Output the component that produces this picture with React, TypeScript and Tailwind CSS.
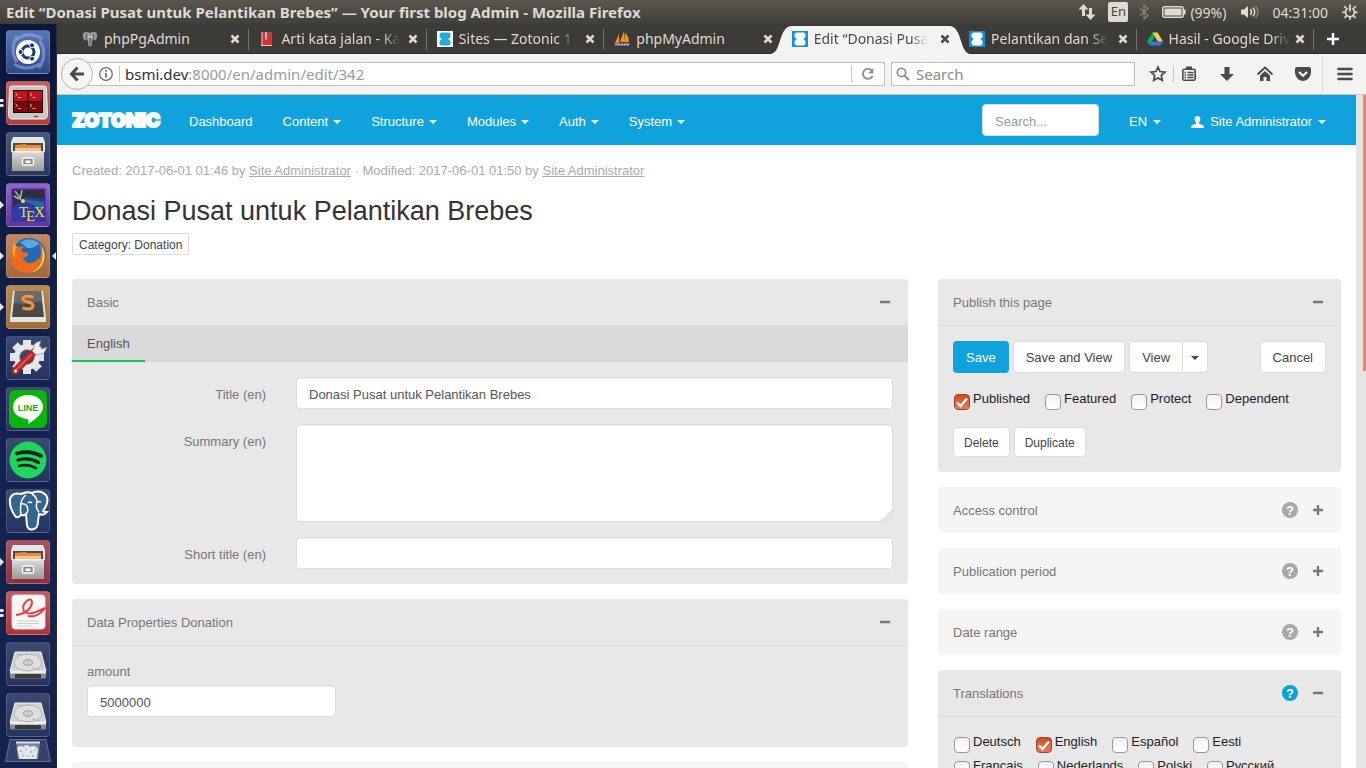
import React, { useId } from "react";

const ubuntu = "font-['Noto_Sans',sans-serif]";

/* ---------- Desktop top bar ---------- */

function TopBar() {
  return (
    <header
      className={`${ubuntu} flex h-6 shrink-0 items-center justify-between bg-linear-to-b from-[#5a574d] to-[#3f3e39] pr-2 pl-1.5 text-[14px] text-[#dfdbd2]`}
    >
      <h1 className="truncate text-[15px] font-bold">
        Edit “Donasi Pusat untuk Pelantikan Brebes” — Your first blog Admin - Mozilla Firefox
      </h1>
      <div className="flex shrink-0 items-center">
        <svg width="18" height="16" viewBox="0 0 18 16" fill="#dfdbd2" className="mr-3" aria-label="Network">
          <path d="M5.500 0l5 5.500H7V12H4V5.500H.5z" />
          <path d="M12.500 16l-5-5.500H11V4h3v6.500h3.500z" />
        </svg>
        <span className="mr-2 flex h-5 w-5 items-center justify-center rounded-xs bg-[#dfdbd2] text-[13px] text-[#45433d]">En</span>
        <svg width="16" height="16" viewBox="0 0 16 16" fill="none" stroke="#85827a" strokeWidth="1.300" className="mr-2.5" aria-label="Bluetooth">
          <path d="M4 4.500l8 7L8 15V1l4 3.500-8 7" />
        </svg>
        <svg width="24" height="12" viewBox="0 0 24 12" className="mr-1" aria-label="Battery">
          <rect x=".75" y=".75" width="20.500" height="10.500" rx="2" fill="none" stroke="#dfdbd2" strokeWidth="1.500" />
          <rect x="2.500" y="2.500" width="17" height="7" fill="#dfdbd2" />
          <rect x="21.500" y="3.500" width="2" height="5" fill="#dfdbd2" />
        </svg>
        <span className="mr-3.5">(99%)</span>
        <svg width="20" height="16" viewBox="0 0 20 16" fill="none" stroke="#dfdbd2" strokeWidth="1.500" className="mr-3" aria-label="Volume">
          <path d="M1 5.500h3L8 2v12l-4-3.500H1z" fill="#dfdbd2" stroke="none" />
          <path d="M10.500 5q2 3 0 6M13 3.500q3.500 4.500 0 9" />
          <path d="M15.500 2q5 6 0 12" stroke="#85827a" />
        </svg>
        <span className="mr-3.5">04:31:00</span>
        <svg width="16" height="16" viewBox="0 0 16 16" fill="none" stroke="#dfdbd2" aria-label="Session">
          <path d="M6 4.200a4.500 4.500 0 1 0 4 0" strokeWidth="1.700" />
          <path d="M8 .5v7" strokeWidth="1.800" />
          <path d="M4 4L2.300 2.300M12 4l1.700-1.700M3 8.300H.3M15.700 8.300H13M4.300 12l-1.800 1.800M11.700 12l1.800 1.800M8 13v2.700" strokeWidth="1.800" />
        </svg>
      </div>
    </header>
  );
}

/* ---------- Launcher ---------- */

type TileProps = {
  name: string;
  tone: string;
  left?: "one" | "two";
  right?: boolean;
  children: React.ReactNode;
};

function Tile({ name, tone, left, right, children }: TileProps) {
  return (
    <li className="relative flex justify-center">
      {left === "one" && (
        <svg className="absolute top-4.5 left-0" width="4" height="8" viewBox="0 0 4 8"><path d="M0 0l4 4-4 4z" fill="#e6e6e6" /></svg>
      )}
      {left === "two" && (
        <svg className="absolute top-4.5 left-0" width="4" height="8" viewBox="0 0 4 8"><path d="M0 0h3l1 1.500L3 3H0zM0 5h3l1 1.500L3 8H0z" fill="#e6e6e6" /></svg>
      )}
      <button
        aria-label={name}
        className={`size-11 overflow-hidden rounded-sm border border-white/15 bg-linear-to-b ${tone}`}
      >
        <svg viewBox="0 0 44 44" className="-m-px size-11">{children}</svg>
      </button>
      {right && (
        <svg className="absolute top-4.5 right-0" width="4" height="8" viewBox="0 0 4 8"><path d="M4 0L0 4l4 4z" fill="#e6e6e6" /></svg>
      )}
    </li>
  );
}

function Cabinet() {
  const g = useId();
  return (
    <>
      <defs>
        <linearGradient id={g} x1="0" y1="0" x2="0" y2="1">
          <stop offset="0" stopColor="#dcdcdc" />
          <stop offset="1" stopColor="#9a9a9a" />
        </linearGradient>
      </defs>
      <path d="M7 5h30l2 5v10H5V10z" fill="#e6e6e6" />
      <path d="M7 11h30v8H7z" fill="#4a4a4a" />
      <path d="M9 13l10-1 2 1h14v7H9z" fill="#e88a3c" />
      <path d="M9 16h26v3H9z" fill="#f6c48c" />
      <path d="M6 19h32v20H6z" fill={`url(#${g})`} />
      <path d="M6 19h32v1.500H6z" fill="#f3f3f3" />
      <rect x="16.500" y="26" width="11" height="7" rx="1" fill="#8a8a8a" stroke="#fff" strokeWidth="1.500" />
      <rect x="19.500" y="28.500" width="5" height="2.500" fill="#fff" />
    </>
  );
}

function Disk() {
  return (
    <>
      <path d="M9 10h26l5 19H4z" fill="#d2d2d2" stroke="#f0f0f0" />
      <path d="M4 29h36v6q0 1.500-2 1.500H6q-2 0-2-1.500z" fill="#8d8d8d" />
      <path d="M9 32h26v4H9z" fill="#3a3a3a" />
      <path d="M4 29h36v2.500H4z" fill="#f0f0f0" />
      <ellipse cx="22" cy="20.500" rx="14" ry="8.500" fill="#dedede" stroke="#b4b4b4" />
      <ellipse cx="22" cy="20.500" rx="4.500" ry="2.700" fill="#cfcfcf" stroke="#999" />
      <path d="M11 12q8 2 11-1M26 26l8 2" stroke="#b4b4b4" fill="none" />
    </>
  );
}

function Launcher() {
  return (
    <nav aria-label="Launcher" className="w-[57px] shrink-0 overflow-hidden border-r border-[#2c2a2e] bg-linear-to-b from-[#0b1638] via-[#13224f] to-[#14224c] pt-1.5">
      <ul className="flex flex-col gap-[7px]">
        <Tile name="Dash" tone="from-[#5a77b5] to-[#2f478c]">
          <path d="M11 6q-8 14 0 26M33 38q9-14 1-27M8 34q12 8 26 0M36 9Q22 0 10 10" stroke="#9fb4dc" strokeWidth="3" fill="none" opacity=".55" />
          <circle cx="22" cy="22" r="12" fill="#fff" />
          <circle cx="22" cy="22" r="6" fill="none" stroke="#1d3573" strokeWidth="3" />
          <g fill="#1d3573" stroke="#fff" strokeWidth="1">
            <circle cx="14.500" cy="22" r="2.500" /><circle cx="26" cy="15.300" r="2.500" /><circle cx="26" cy="28.700" r="2.500" />
          </g>
        </Tile>
        <Tile name="Terminator" tone="from-[#c86064] to-[#b03c3e]" left="two">
          <path d="M6 5h32q2.500 0 2.500 2.500l1 26Q41.500 38 38 38H6q-3.500 0-3.500-4.500l1-26Q3.500 5 6 5z" fill="#c9c9c4" stroke="#f0f0ee" />
          <rect x="7" y="9" width="30" height="23" fill="#1c0304" />
          <path d="M8 10h13.500v10H8zM22.500 10H36v10H22.500z" fill="#c31219" />
          <path d="M8 21h13.500v10H8zM22.500 21H36v10H22.500z" fill="#7d080c" />
          <g stroke="#f4c9c9" strokeWidth=".8" fill="none">
            <path d="M9.500 12l2 1.500-2 1.500M12 16.500h3M24 12l2 1.500-2 1.500M26.500 16.500h3M9.500 23l2 1.500-2 1.500M12 27.500h3M24 23l2 1.500-2 1.500M26.500 27.500h3" />
          </g>
          <path d="M28 35.500h4" stroke="#ee2b22" strokeWidth="1.500" />
        </Tile>
        <Tile name="Files" tone="from-[#4a5674] to-[#2a3960]"><Cabinet /></Tile>
        <Tile name="TeX editor" tone="from-[#8f66c4] to-[#5c369c]" left="one">
          <rect x="6" y="6" width="33" height="32" fill="#2b3ba8" stroke="#5a1d8c" />
          <path d="M7 7h31v9L20 14 7 24z" fill="#2c3038" />
          <path d="M14 16l24 3v8z" fill="#19a08c" opacity=".5" />
          <path d="M9 8l6 8M16 7l-2 10M8 13l5 3" stroke="#aab0bb" strokeWidth="1.500" />
          <circle cx="17" cy="18" r="2" fill="#e4e84a" />
          <text x="13" y="34" fontFamily="Liberation Serif, serif" fontSize="15" fill="#f3de2e">T</text>
          <text x="20" y="38" fontFamily="Liberation Serif, serif" fontSize="15" fill="#f3de2e">E</text>
          <text x="28" y="34" fontFamily="Liberation Serif, serif" fontSize="15" fill="#f3de2e">X</text>
        </Tile>
        <Tile name="Firefox" tone="from-[#c08a62] to-[#a2683e]" left="one" right>
          <circle cx="23" cy="21" r="17" fill="#2768b4" />
          <path d="M14 8q10-6 19 1-4 6-12 5z" fill="#57a7e0" />
          <path d="M33 9q6 5 6 13-1 15-16 17Q7 39 4.500 24 4 14 8 8q1 4 3 5 4-1 7 0-4 3-2 5l6 1q1 3-5 5 2 6 8 5 6-1 7-5 1 0 1 2 4-8 0-17z" fill="#ea6d1f" />
          <path d="M36 12q4 7 2 15-3 9-12 11 9-5 10-12 1-7 0-14z" fill="#f9d14a" />
          <path d="M8 8q1 4 3 5-4 6-1 13-6-9-2-18z" fill="#f9a13a" />
        </Tile>
        <Tile name="Sublime Text" tone="from-[#b98a58] to-[#a06c34]" left="one">
          <path d="M7 6h30l3 27v4H4v-4z" fill="#e3e3e3" />
          <path d="M9 6h26l3 26H6z" fill="#4a4a4a" />
          <path d="M9 6h26l1 10Q22 20 8 18z" fill="#6a6a6a" />
          <path d="M27.500 12q-10-2-10.500 1.500 0 2.500 5 3.500t5 4q-.5 4.500-10.500 2" stroke="#f6933a" strokeWidth="3" fill="none" />
        </Tile>
        <Tile name="System Settings" tone="from-[#3c4970] to-[#24335f]">
          <g stroke="#e4e4e4" strokeWidth="8">
            <path d="M21 4v34M4 21h34M9 9l24 24M33 9L9 33" />
          </g>
          <circle cx="21" cy="21" r="13" fill="#e9e9e9" />
          <circle cx="21" cy="21" r="7.500" fill="#3a466b" stroke="#aaa" />
          <path d="M9 35L28 16" stroke="#b8241f" strokeWidth="7" strokeLinecap="round" />
          <path d="M10 34L26 18" stroke="#de5a50" strokeWidth="2" />
          <path d="M26 15l4 4 8-2 3-6-5 2-3-3 2-5q-7 1-7 7z" fill="#f0f0f0" stroke="#888" strokeWidth=".7" />
          <circle cx="9.500" cy="35" r="1.500" fill="#fff" />
        </Tile>
        <Tile name="LINE" tone="from-[#3c4970] to-[#24335f]">
          <rect x="3" y="3" width="38" height="38" rx="6" fill="#0bb40c" />
          <path d="M22 8c9 0 15 5.500 15 12 0 5.500-5 10.500-15 17 1-2.500 1-4.500-1-5C13 31 7 26.500 7 20 7 13.500 13 8 22 8z" fill="#fff" />
          <text x="22" y="24" textAnchor="middle" fontFamily="Liberation Sans, sans-serif" fontWeight="bold" fontSize="9" fill="#0bb40c">LINE</text>
        </Tile>
        <Tile name="Spotify" tone="from-[#3c4970] to-[#24335f]">
          <circle cx="22" cy="22" r="18.500" fill="#1fd65e" />
          <g stroke="#14241a" fill="none" strokeLinecap="round">
            <path d="M11 15.500q13-3.500 24 2.500" strokeWidth="3.800" />
            <path d="M12 22q11-3 20.500 2.500" strokeWidth="3.200" />
            <path d="M13 28q9-2.500 17 2.200" strokeWidth="2.600" />
          </g>
        </Tile>
        <Tile name="PostgreSQL" tone="from-[#3c4970] to-[#24335f]">
          <path d="M15 5Q6 3 4 10q-1 8 5 17 3 3 6-1 3 1 5-1l1 12q2 5 7 3 4-1 4-8l1-7q5 2 8-2-3 0-4-1 7-10 3-16-6-6-14-2-5-2-11 1z" fill="#336791" stroke="#fff" strokeWidth="2" />
          <path d="M15 26q-1-6 0-12 1-5 5-8M20 25q3-2 1-8-2-3-6-2M33 23q-4-4-2-10 0-5-5-8M31 13q2-1 4 0M26 14q-2-2-4 0" stroke="#fff" strokeWidth="1.500" fill="none" />
        </Tile>
        <Tile name="Documents" tone="from-[#a65466] to-[#8c2f3e]" left="one"><Cabinet /></Tile>
        <Tile name="Document Viewer" tone="from-[#c25a60] to-[#ae3338]" left="two">
          <rect x="6" y="4" width="33" height="34" rx="3" fill="#f7f7f7" stroke="#ddd" />
          <path d="M10 24q14-2 16-12 0-5-4-3-7 5-4 11 4 6 21-3-7 10-17 8" stroke="#dc4448" strokeWidth="2" fill="none" />
          <path d="M11 30h22M11 32.500h22M11 35h15" stroke="#cfcfcf" />
        </Tile>
        <Tile name="Disk 1" tone="from-[#3c4970] to-[#24335f]"><Disk /></Tile>
        <Tile name="Disk 2" tone="from-[#3c4970] to-[#24335f]"><Disk /></Tile>
      </ul>
      <button aria-label="Trash" className="mt-0.5 ml-[5px] block">
        <svg width="46" height="24" viewBox="0 0 46 24">
          <path d="M5 .5h36l4.500 22H.5z" fill="#35436b" stroke="#66719a" />
          <path d="M11 3h24l-2 17H13z" fill="#7d879c" />
          <path d="M12 9q3-4 6-1 4-4 7 0 5-3 8 2l-1.500 10h-17z" fill="#e4e8ea" />
          <g fill="#b4babf">
            <circle cx="16" cy="12" r="1.200" /><circle cx="21" cy="10.500" r="1" /><circle cx="26" cy="13" r="1.300" /><circle cx="30" cy="11" r="1" />
            <circle cx="18" cy="16.500" r="1.200" /><circle cx="23" cy="17" r="1" /><circle cx="28" cy="17" r="1.200" />
          </g>
          <path d="M11 3.500h24" stroke="#d7dbe2" strokeWidth="2" />
        </svg>
      </button>
    </nav>
  );
}

/* ---------- Browser tabs ---------- */

function ZotonicMark({ inverse }: { inverse?: boolean }) {
  return (
    <svg width="16" height="16" viewBox="0 0 16 16" className={inverse ? "bg-white" : "bg-[#0e93df]"}>
      <g fill={inverse ? "#25a9e0" : "#fff"}>
        <rect x="2.500" y="1.500" width="11" height="6" rx="2.500" />
        <rect x="2.500" y="8.500" width="11" height="6" rx="2.500" />
        <rect x="4.500" y="5" width="7" height="6" />
      </g>
    </svg>
  );
}

const favicons: Record<string, React.ReactNode> = {
  elephant: (
    <svg width="16" height="16" viewBox="0 0 16 16">
      <path d="M4 1Q0 1 1 6q1 4 4 3l1 1v4q2 3 4 0v-4l1-1q3 1 4-3 1-5-3-5-2 0-4 1-2-1-4-1z" fill="#9b9b9b" />
      <path d="M5 3q-2 3 0 6M11 3q2 3 0 6M8 7v7" stroke="#555" fill="none" />
      <circle cx="6.500" cy="6" r=".8" fill="#fff" /><circle cx="9.500" cy="6" r=".8" fill="#fff" />
    </svg>
  ),
  book: (
    <svg width="16" height="16" viewBox="0 0 16 16">
      <path d="M2 1h11v14H2z" fill="#d8303c" /><path d="M2 1h2v14H2z" fill="#ef6a6a" /><path d="M6 1h2v8l-1-1-1 1z" fill="#7fd0b4" />
      <path d="M2 14h11v1H2z" fill="#f1c9c9" />
    </svg>
  ),
  sites: <ZotonicMark inverse />,
  zotonic: <ZotonicMark />,
  sail: (
    <svg width="16" height="16" viewBox="0 0 16 16">
      <path d="M5 3L1 12h4zM10 0L6 11h5zM11 2q4 3 4 9l-4 .5z" fill="#f29111" />
      <path d="M0 12h16l-1 3H2z" fill="#6c6a92" /><path d="M1 13.500h14" stroke="#c8c8dc" strokeDasharray="2 1" />
    </svg>
  ),
  drive: (
    <svg width="16" height="16" viewBox="0 0 16 16">
      <path d="M5.500 1.500L0 10.500l2.700 4L8 5.500z" fill="#11a861" />
      <path d="M5.500 1.500h5l5.500 9h-5.200z" fill="#ffcf48" />
      <path d="M5.300 10.500H16l-2.700 4H2.700z" fill="#3777e3" />
    </svg>
  ),
};

const tabs = [
  { title: "phpPgAdmin", icon: "elephant" },
  { title: "Arti kata jalan - Ka", icon: "book", fade: true },
  { title: "Sites — Zotonic 1.", icon: "sites", fade: true },
  { title: "phpMyAdmin", icon: "sail" },
  { title: "Edit “Donasi Pusa", icon: "zotonic", active: true, fade: true },
  { title: "Pelantikan dan Se", icon: "zotonic", fade: true },
  { title: "Hasil - Google Driv", icon: "drive", fade: true },
];

function TabStrip() {
  return (
    <div role="tablist" className={`${ubuntu} flex h-[30px] shrink-0 border-b border-[#2b2a28] bg-[#3c3b37] pl-[15px] text-[14px]`}>
      {tabs.map((tab, i) => {
        const divided = !tab.active && !tabs[i + 1]?.active;
        return (
          <div
            key={tab.title}
            role="tab"
            aria-selected={!!tab.active}
            className={`relative flex min-w-0 flex-1 items-center gap-1.5 pr-2 pl-2.5 ${tab.active ? "z-10 text-[#4b4a48]" : "text-[#dfdbd2]"}`}
          >
            {tab.active && (
              <>
                <svg className="absolute top-0.5 -left-3" width="22" height="28" viewBox="0 0 22 28"><path d="M0 28C12 28 8 0 22 0v28z" fill="#f4f3f2" /></svg>
                <div className="absolute inset-x-[10px] top-0.5 h-7 bg-[#f4f3f2]" />
                <svg className="absolute top-0.5 -right-3" width="22" height="28" viewBox="0 0 22 28"><path d="M22 28C10 28 14 0 0 0v28z" fill="#f4f3f2" /></svg>
              </>
            )}
            <span className="relative shrink-0">{favicons[tab.icon]}</span>
            <span className="relative min-w-0 flex-1">
              <span className={`inline-block whitespace-nowrap ${tab.fade ? "mask-r-from-85%" : ""}`}>{tab.title}</span>
            </span>
            <button aria-label={`Close ${tab.title}`} className="relative shrink-0">
              <svg width="12" height="12" viewBox="0 0 12 12" stroke="currentColor" strokeWidth="2.500"><path d="M2.500 2.500l7 7M9.500 2.500l-7 7" /></svg>
            </button>
            {divided && <span className="absolute top-[5px] right-0 h-[21px] w-px bg-[#75736d]" />}
          </div>
        );
      })}
      <button aria-label="New tab" className="w-[52px] pl-3 text-white">
        <svg width="14" height="14" viewBox="0 0 14 14" stroke="currentColor" strokeWidth="2.500"><path d="M7 1v12M1 7h12" /></svg>
      </button>
    </div>
  );
}

/* ---------- Browser toolbar ---------- */

function ToolButton({ label, children }: { label: string; children: React.ReactNode }) {
  return (
    <button aria-label={label} className="flex w-[38px] justify-center text-[#4a4a4a]">
      <svg width="18" height="18" viewBox="0 0 18 18">{children}</svg>
    </button>
  );
}

function Toolbar() {
  return (
    <div className={`${ubuntu} flex h-[41px] shrink-0 items-center border-b border-[#c8c5c0] bg-[#f4f3f2] pl-1 text-[14px]`}>
      <button aria-label="Back" className="z-10 flex size-8 shrink-0 items-center justify-center rounded-full border border-[#b7b4af] bg-[#f7f6f5]">
        <svg width="16" height="16" viewBox="0 0 16 16" fill="none" stroke="#4a4a4a" strokeWidth="3"><path d="M8.500 1.500L2.500 8l6 6.500M3 8h12" /></svg>
      </button>
      <div className="-ml-3 flex h-6 min-w-0 flex-1 items-center border border-[#c3c0bb] bg-white pl-[17px]">
        <svg width="14" height="14" viewBox="0 0 14 14" fill="none" stroke="#6b6b6b" className="shrink-0">
          <circle cx="7" cy="7" r="6.300" strokeWidth="1.300" /><path d="M7 6v4.500M7 3v1.700" strokeWidth="1.700" />
        </svg>
        <span className="mr-[5px] ml-1.5 h-4 w-px bg-[#c8c8c8]" />
        <p className="flex-1 truncate text-[15px] text-[#9b9b9b]"><span className="text-[#2e2e2e]">bsmi.dev</span>:8000/en/admin/edit/342</p>
        <button aria-label="Reload" className="flex h-4 w-[33px] items-center justify-center border-l border-[#c8c8c8]">
          <svg width="12" height="12" viewBox="0 0 12 12"><path d="M10 2.800A5 5 0 1 0 10.500 8" fill="none" stroke="#8c96a3" strokeWidth="2" /><path d="M11.500 0v5.500H6z" fill="#8c96a3" /></svg>
        </button>
      </div>
      <label className="ml-1.5 flex h-6 w-[244px] shrink-0 items-center gap-1.5 border border-[#c3c0bb] bg-white pl-1">
        <svg width="14" height="14" viewBox="0 0 14 14" fill="none" stroke="#929292"><circle cx="5.500" cy="5.500" r="4.200" strokeWidth="1.800" /><path d="M8.500 8.500l4.500 4.500" strokeWidth="2.300" /></svg>
        <input aria-label="Search the web" placeholder="Search" className="min-w-0 flex-1 text-[15px] outline-none placeholder:text-[#8c8c8c]" />
      </label>
      <div className="ml-1 flex shrink-0 items-center">
        <ToolButton label="Bookmark this page">
          <path d="M9 2l2 4.500 5 .6-3.700 3.300 1 4.900L9 12.900l-4.300 2.400 1-4.900L2 7.100l5-.6z" fill="none" stroke="currentColor" strokeWidth="1.700" />
        </ToolButton>
        <span className="-ml-1 h-4 w-px bg-[#c8c8c8]" />
        <span className="-ml-1"><ToolButton label="Bookmarks">
          <rect x="2.800" y="4.300" width="12.400" height="11" rx="1.500" fill="none" stroke="currentColor" strokeWidth="1.600" />
          <path d="M6 1.500h6v3.500H6z" fill="currentColor" />
          <path d="M4.500 7.500h1.500M7.500 7.500h6M4.500 10h1.500M7.500 10h6M4.500 12.500h1.500M7.500 12.500h6" stroke="currentColor" strokeWidth="1.400" />
        </ToolButton></span>
        <ToolButton label="Downloads"><path d="M6.500 2h5v7H16l-7 7-7-7h4.500z" fill="currentColor" /></ToolButton>
        <ToolButton label="Home">
          <path d="M1.500 9.500L9 2.500l7.500 7" fill="none" stroke="currentColor" strokeWidth="1.800" /><path d="M4 10.500L9 6l5 4.500V16h-3.500v-4h-3v4H4z" fill="currentColor" />
        </ToolButton>
        <ToolButton label="Pocket">
          <path d="M3 2h12q2 0 2 2v4q-1 7-8 8-7-1-8-8V4q0-2 2-2z" fill="currentColor" /><path d="M5 7l4 3.700L13 7" stroke="#f4f3f2" strokeWidth="2.200" fill="none" />
        </ToolButton>
        <span className="h-9 w-px bg-[#dcdad7]" />
        <button aria-label="Menu" className="flex w-[43px] justify-center text-[#4a4a4a]">
          <svg width="16" height="14" viewBox="0 0 16 14" stroke="currentColor" strokeWidth="2.600" strokeLinecap="round"><path d="M1.500 2h13M1.500 7h13M1.500 12h13" /></svg>
        </button>
      </div>
    </div>
  );
}

/* ---------- Admin page ---------- */

function Caret() {
  return <svg width="8" height="4" viewBox="0 0 8 4" className="inline-block shrink-0" fill="currentColor"><path d="M0 0h8L4 4z" /></svg>;
}

function AdminNav() {
  return (
    <nav className="flex h-[50px] items-center bg-[#10a2dc] px-[15px] text-white">
      <a href="#home" className="mr-3.5 w-[88px] font-['Inter',sans-serif] text-[19px] leading-none font-black [-webkit-text-stroke:2px_white]">ZOTONIC</a>
      <a href="#dashboard" className="px-[15px] pt-[3px]">Dashboard</a>
      {["Content", "Structure", "Modules", "Auth", "System"].map((item) => (
        <button key={item} className="flex items-center gap-[5px] px-[15px] pt-[3px]">{item}<Caret /></button>
      ))}
      <input
        aria-label="Search"
        placeholder="Search..."
        className="ml-auto h-8 w-[117px] rounded-sm border border-[#dcdcdc] bg-white px-3 pt-0.5 text-[#555] outline-none placeholder:text-[#999]"
      />
      <button className="ml-[15px] flex items-center gap-1.5 px-[15px] pt-[3px]">EN<Caret /></button>
      <button className="flex items-center gap-1.5 px-[15px] pt-[3px]">
        <svg width="13" height="12" viewBox="0 0 13 12" fill="currentColor"><path d="M6.500 0C8.500 0 9.500 1.400 9.300 3.200 9.100 5 8.300 5.800 8 6.300v1.200l4 1.700q1 .5 1 2.800H0q0-2.300 1-2.800l4-1.700V6.300C4.700 5.800 3.900 5 3.700 3.200 3.500 1.400 4.500 0 6.500 0z" /></svg>
        Site Administrator<Caret />
      </button>
    </nav>
  );
}

type PanelProps = { title: string; open?: boolean; help?: "gray" | "blue"; plain?: boolean; children?: React.ReactNode };

function Panel({ title, open, help, plain, children }: PanelProps) {
  return (
    <section className={`overflow-hidden rounded-sm ${open ? "bg-[#e8e8e8]" : "bg-[#f5f5f5]"}`}>
      <div className={`flex items-center pr-[18px] pl-[15px] ${open ? "h-[47px] border-b" : "h-[46px]"} ${plain ? "border-[#d9d9d9]" : "border-[#dcdcdc]"}`}>
        <h3 className="flex-1 pt-0.5">{title}</h3>
        {help && (
          <button
            aria-label={`Help for ${title}`}
            className={`mr-[15px] flex size-4 items-center justify-center rounded-full text-[13px] leading-none font-bold text-white ${help === "blue" ? "bg-[#0aa0d8]" : "bg-[#a8a8a8]"}`}
          >
            ?
          </button>
        )}
        <button aria-label={`${open ? "Collapse" : "Expand"} ${title}`}>
          <svg width="10" height="10" viewBox="0 0 10 10" stroke="#777" strokeWidth="2.300"><path d={open ? "M0 5h10" : "M0 5h10M5 0v10"} /></svg>
        </button>
      </div>
      {children}
    </section>
  );
}

function Check({ label, checked }: { label: string; checked?: boolean }) {
  return (
    <label className="mr-3.5 flex h-6 items-start gap-[3px] pl-px leading-5 text-[#222]">
      <span className="relative mt-[5px] size-4">
        <input
          type="checkbox"
          defaultChecked={checked}
          className="peer block size-4 appearance-none rounded-[4px] border border-[#989898] bg-linear-to-b from-[#f2f2f2] to-white checked:border-[#9b4524] checked:from-[#cf4a1c] checked:to-[#e4805c]"
        />
        <svg viewBox="0 0 16 16" className="pointer-events-none absolute inset-0 size-4 opacity-0 peer-checked:opacity-100" fill="none" stroke="#fff" strokeWidth="2.400"><path d="M3 8.500l3.500 3.500L13 4.500" /></svg>
      </span>
      {label}
    </label>
  );
}

const field = "block h-8 rounded-sm border border-[#dcdcdc] bg-white px-3 pt-0.5 text-[#555] shadow-[inset_0_1px_1px_rgba(0,0,0,0.075)] outline-none";
const button = "h-8 rounded-sm border border-[#dcdcdc] bg-white px-3 pt-0.5 text-[#444]";
const smallButton = "h-[30px] rounded-sm border border-[#dcdcdc] bg-white px-2.5 pt-0.5 text-[12px] text-[#444]";

function FormRow({ id, label, children }: { id: string; label: string; children: React.ReactNode }) {
  return (
    <div className="flex">
      <label htmlFor={id} className="w-1/4 pt-2 pr-[15px] text-right leading-5">{label}</label>
      <div className="w-3/4 px-[15px]">{children}</div>
    </div>
  );
}

function AdminPage() {
  return (
    <div className="min-w-0 flex-1 overflow-hidden bg-white font-['Liberation_Sans',sans-serif] text-[13px] text-[#777]">
      <AdminNav />
      <main className="px-[15px] pt-4">
        <p className="leading-5 text-[#aaa]">
          Created: 2017-06-01 01:46 by <a href="#user" className="underline">Site Administrator</a> · Modified: 2017-06-01 01:50 by{" "}
          <a href="#user" className="underline">Site Administrator</a>
        </p>
        <h2 className="mt-3 text-[27px] leading-9 text-[#333]">Donasi Pusat untuk Pelantikan Brebes</h2>
        <a href="#category" className="mt-1 inline-flex h-[22px] items-center rounded-xs border border-[#dcdcdc] px-[6px] pt-px align-top text-[12px] text-[#444]">
          Category: Donation
        </a>
        <div className="mt-6 grid grid-cols-3 items-start gap-[30px]">
          <div className="col-span-2 flex flex-col gap-[15px]">
            <Panel title="Basic" open plain>
              <div className="flex h-9 bg-[#d9d9d9] text-[#555]">
                <button className="border-b-2 border-[#0ac856] px-[15px] pt-0.5">English</button>
              </div>
              <form className="flex flex-col gap-[15px] py-[15px]">
                <FormRow id="title" label="Title (en)"><input id="title" defaultValue="Donasi Pusat untuk Pelantikan Brebes" className={`w-full ${field}`} /></FormRow>
                <FormRow id="summary" label="Summary (en)">
                  <textarea
                    id="summary"
                    className="block h-[98px] w-full resize-y rounded-sm border border-[#dcdcdc] bg-white px-3 py-1.5 text-[#555] shadow-[inset_0_1px_1px_rgba(0,0,0,0.075)] outline-none [&::-webkit-resizer]:bg-[linear-gradient(135deg,transparent_60%,#e4e4e4_60%)]"
                  />
                </FormRow>
                <FormRow id="short" label="Short title (en)"><input id="short" className={`w-full ${field}`} /></FormRow>
              </form>
            </Panel>
            <Panel title="Data Properties Donation" open>
              <div className="px-[15px] pt-4 pb-[30px]">
                <label htmlFor="amount" className="mb-[3px] block leading-5">amount</label>
                <input id="amount" defaultValue="5000000" className={`w-[249px] ${field}`} />
              </div>
            </Panel>
            <Panel title="Content" />
          </div>
          <div className="flex flex-col gap-[15px]">
            <Panel title="Publish this page" open>
              <div className="p-[15px]">
                <div className="flex gap-1">
                  <button className="h-8 rounded-sm bg-[#10a2dc] px-[13px] pt-0.5 text-white">Save</button>
                  <button className={button}>Save and View</button>
                  <div className="flex">
                    <button className="h-8 rounded-l-sm border border-[#dcdcdc] bg-white px-3 pt-0.5 text-[#444]">View</button>
                    <button aria-label="More views" className="-ml-px flex h-8 items-center rounded-r-sm border border-[#dcdcdc] bg-white px-2 pt-0.5 text-[#444]"><Caret /></button>
                  </div>
                  <span className="flex-1" />
                  <button className={button}>Cancel</button>
                </div>
                <div className="mt-4 mb-3.5 flex flex-wrap">
                  <Check label="Published" checked />
                  <Check label="Featured" />
                  <Check label="Protect" />
                  <Check label="Dependent" />
                </div>
                <div className="flex gap-1">
                  <button className={smallButton}>Delete</button>
                  <button className={smallButton}>Duplicate</button>
                </div>
              </div>
            </Panel>
            <Panel title="Access control" help="gray" />
            <Panel title="Publication period" help="gray" />
            <Panel title="Date range" help="gray" />
            <Panel title="Translations" open help="blue">
              <div className="flex flex-wrap p-[15px]">
                <Check label="Deutsch" />
                <Check label="English" checked />
                <Check label="Español" />
                <Check label="Eesti" />
                <Check label="Français" />
                <Check label="Nederlands" />
                <Check label="Polski" />
                <Check label="Русский" />
              </div>
            </Panel>
          </div>
        </div>
      </main>
    </div>
  );
}

export default function App() {
  return (
    <div className="flex h-screen flex-col overflow-hidden">
      <TopBar />
      <div className="flex min-h-0 flex-1">
        <Launcher />
        <div className="flex min-w-0 flex-1 flex-col">
          <TabStrip />
          <Toolbar />
          <div className="flex min-h-0 flex-1">
            <AdminPage />
            <div className="flex w-2.5 shrink-0 justify-end bg-[#e5e5e5]">
              <div className="h-[41%] w-[3px] bg-[#f08763]" />
            </div>
          </div>
        </div>
      </div>
    </div>
  );
}
